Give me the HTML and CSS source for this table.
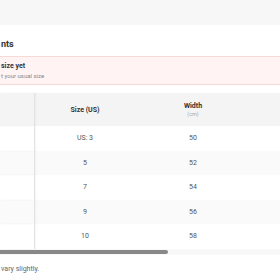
FILE: index.html
```html
<!DOCTYPE html>
<html lang="en">
<head>
    <meta charset="UTF-8">
    <meta name="viewport" content="width=device-width, initial-scale=1.0">
    <title>Size Guide</title>
    <link rel="stylesheet" href="styles.css">
</head>
<body>
    <div class="topbar"></div>

    <div class="page">
        <h2 class="section-title">nts</h2>

        <div class="notice">
            <div class="notice-title">size yet</div>
            <div class="notice-text">t your usual size</div>
        </div>

        <div class="size-table">
            <div class="row head">
                <div class="cell sticky"></div>
                <div class="cell">Size (US)</div>
                <div class="cell">
                    <span>Width</span>
                    <span class="unit">(cm)</span>
                </div>
                <div class="cell"></div>
            </div>
            <div class="row">
                <div class="cell sticky"></div>
                <div class="cell">US: 3</div>
                <div class="cell">50</div>
                <div class="cell"></div>
            </div>
            <div class="row">
                <div class="cell sticky"></div>
                <div class="cell">5</div>
                <div class="cell">52</div>
                <div class="cell"></div>
            </div>
            <div class="row">
                <div class="cell sticky"></div>
                <div class="cell">7</div>
                <div class="cell">54</div>
                <div class="cell"></div>
            </div>
            <div class="row">
                <div class="cell sticky"></div>
                <div class="cell">9</div>
                <div class="cell">56</div>
                <div class="cell"></div>
            </div>
            <div class="row">
                <div class="cell sticky"></div>
                <div class="cell">10</div>
                <div class="cell">58</div>
                <div class="cell"></div>
            </div>
            <div class="scroll-track">
                <div class="scroll-thumb"></div>
            </div>
        </div>

        <p class="footnote">vary slightly.</p>
    </div>
</body>
</html>
```

FILE: styles.css
```css
body {
    margin: 0;
    font-family: 'Roboto', 'Liberation Sans', sans-serif;
    background: #ffffff;
    color: #333333;
    overflow: hidden;
}

.topbar {
    height: 25px;
    background: #f7f7f7;
}

.section-title {
    margin: 13px 0 6px;
    padding-left: 1px;
    font-size: 9px;
    line-height: 12px;
    font-weight: 700;
    color: #333333;
}

.notice {
    padding: 4px 1px;
    background: #fff4f3;
    border-top: 1px solid #f7d9d6;
    border-bottom: 1px solid #f7d9d6;
}

.notice-title {
    font-size: 7px;
    line-height: 10px;
    font-weight: 700;
    color: #333333;
}

.notice-text {
    margin-top: 1px;
    font-size: 6px;
    line-height: 8px;
    color: #888888;
}

.size-table {
    margin-top: 8px;
}

.row {
    display: grid;
    grid-template-columns: 35px 100px 116px 1fr;
    height: 24.5px;
    font-size: 7px;
    color: #555555;
}

.row:nth-child(odd) {
    background: #fafafa;
}

.row.head {
    height: 33px;
    background: #f4f4f4;
    font-weight: 700;
    color: #333333;
}

.cell {
    display: flex;
    flex-direction: column;
    justify-content: center;
    align-items: center;
    line-height: 8px;
}

.cell.sticky {
    border-right: 1px solid #e2e2e2;
    box-shadow: 1px 0 2px rgba(0, 0, 0, 0.04);
}

.unit {
    font-size: 5.5px;
    font-weight: 400;
    color: #aaaaaa;
}

.scroll-track {
    display: flex;
    align-items: center;
    height: 6px;
    background: #f8f8f8;
}

.scroll-thumb {
    width: 168px;
    height: 4px;
    background: #888888;
    border-radius: 0 2px 2px 0;
}

.footnote {
    margin: 10px 0 0;
    padding-left: 1px;
    font-size: 7px;
    line-height: 9px;
    color: #666666;
}
```
